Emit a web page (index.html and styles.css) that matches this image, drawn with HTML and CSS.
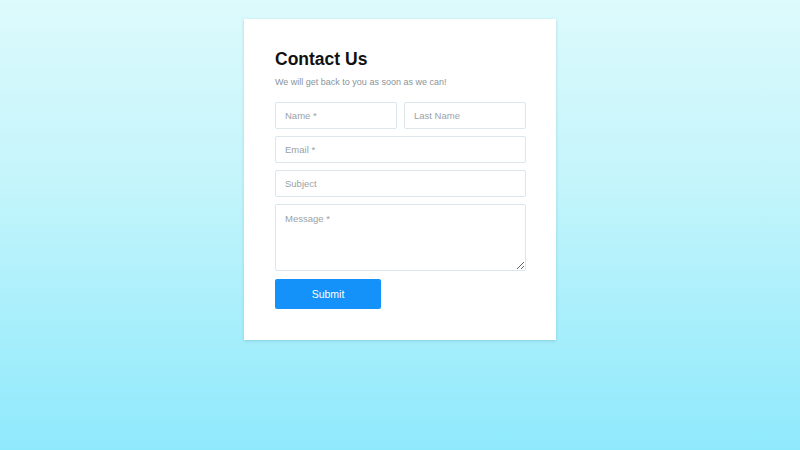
FILE: index.html
```html
<!DOCTYPE html>
<html>
<head>
<meta charset="utf-8">
<link rel="stylesheet" href="styles.css">
</head>
<body>
<div class="page">
  <form class="card">
    <div class="header">
      <h1 class="title">Contact Us</h1>
      <p class="subtitle">We will get back to you as soon as we can!</p>
    </div>
    <div class="row">
      <input class="field" type="text" placeholder="Name *">
      <input class="field" type="text" placeholder="Last Name">
    </div>
    <input class="field" type="email" placeholder="Email *">
    <input class="field" type="text" placeholder="Subject">
    <textarea class="field message" placeholder="Message *"></textarea>
    <button class="submit" type="button">Submit</button>
  </form>
</div>
</body>
</html>
```
FILE: styles.css
```css
html, body {
  margin: 0;
  padding: 0;
  height: 100%;
}
body {
  background: linear-gradient(to bottom, #ddfafc 0%, #c4f5fb 40%, #8fe9fc 100%);
  font-family: "Liberation Sans", Arial, sans-serif;
}
.page {
  display: flex;
  justify-content: center;
  padding-top: 19px;
}
.card {
  width: 251px;
  background: #fff;
  padding: 30px 30px 31px 31px;
  box-shadow: 0 1px 3px rgba(60, 120, 140, 0.25);
  display: flex;
  flex-direction: column;
  gap: 7px;
}
.header {
  margin-bottom: 6px;
}
.title {
  margin: 0;
  font-size: 17.5px;
  font-weight: bold;
  color: #111;
  line-height: 20px;
}
.subtitle {
  margin: 6px 0 0 0;
  font-size: 9px;
  line-height: 14px;
  color: #8a949b;
}
.row {
  display: flex;
  gap: 7px;
}
.row .field {
  flex: 1;
  min-width: 0;
}
.field {
  box-sizing: border-box;
  height: 27px;
  border: 1px solid #dde6ea;
  border-radius: 2px;
  padding: 0 9px;
  font-family: "Liberation Sans", Arial, sans-serif;
  font-size: 9.5px;
  color: #333;
  background: #fff;
  outline: none;
  margin: 0;
}
.field::placeholder {
  color: #9aa2a8;
}
.message {
  height: 67px;
  padding-top: 8px;
  resize: vertical;
}
.submit {
  margin-top: 1px;
  width: 106px;
  height: 30px;
  border: none;
  border-radius: 2px;
  background: #1492f9;
  color: #fff;
  font-family: "Liberation Sans", Arial, sans-serif;
  font-size: 10.5px;
  cursor: pointer;
}
```
